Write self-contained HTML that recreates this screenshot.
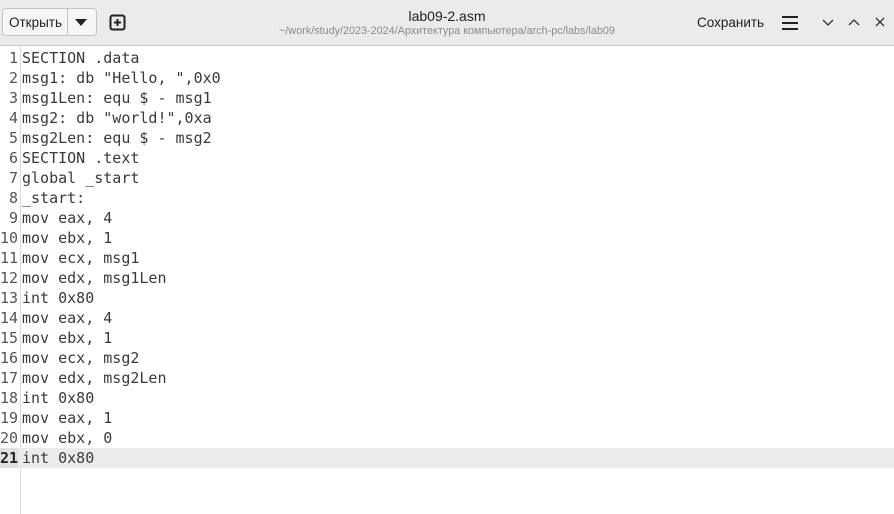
<!DOCTYPE html><html><head><meta charset="utf-8"><style>
body{margin:0;width:894px;height:514px;background:#fff;overflow:hidden;font-family:"Liberation Sans",sans-serif;position:relative}
.hdr{position:absolute;left:0;top:0;width:894px;height:45px;background:#ebebeb;border-bottom:1px solid #c9c9c9}
.btn{position:absolute;top:8px;height:28px;border:1px solid #c4c4c4;background:#f6f6f6;box-sizing:border-box}
.code{position:absolute;top:48px;left:0;width:894px;font-family:"DejaVu Sans Mono",monospace;font-size:15px;color:#3a3a3a}
.ln{height:20px;line-height:20px;white-space:pre;position:relative}
.ln span{display:inline-block;width:18px;text-align:right;color:#555;margin-right:4px}
.cur{background:#ebebeb}
.cur span{color:#222;font-weight:bold;background:#e0e0e0}
.gut{position:absolute;left:20px;top:46px;width:1px;height:468px;background:#dcdcdc}
</style></head><body>
<div class="hdr">
<div class="btn" style="left:2px;width:95px;border-radius:4px"></div>
<div style="position:absolute;left:67px;top:9px;width:1px;height:26px;background:#c4c4c4"></div>
<div style="position:absolute;left:9px;top:15px;font-size:13.5px;color:#222">Открыть</div>
<svg style="position:absolute;left:74px;top:17px" width="14" height="10"><path d="M1 2h12L7 9z" fill="#222"/></svg>
<svg style="position:absolute;left:109px;top:14px" width="18" height="18"><rect x="1.5" y="1.5" width="14" height="14" rx="2" fill="none" stroke="#222" stroke-width="2"/><path d="M8.5 5v7M5 8.5h7" stroke="#222" stroke-width="2"/></svg>
<div style="position:absolute;left:0;width:894px;top:8px;text-align:center;font-size:14px;color:#222">lab09-2.asm</div>
<div style="position:absolute;left:0;width:894px;top:25px;text-align:center;font-size:10.8px;color:#8a8a8a">~/work/study/2023-2024/Архитектура компьютера/arch-pc/labs/lab09</div>
<div style="position:absolute;left:697px;top:15px;font-size:13.5px;color:#222">Сохранить</div>
<svg style="position:absolute;left:781px;top:15px" width="18" height="16"><path d="M1 2h16M1 8h16M1 14h16" stroke="#222" stroke-width="2"/></svg>
<svg style="position:absolute;left:820px;top:16px" width="70" height="14"><path d="M3 4l5 5 5-5" fill="none" stroke="#333" stroke-width="1.3"/><path d="M29 9l5-5 5 5" fill="none" stroke="#333" stroke-width="1.3"/><path d="M56 2l8 8M64 2l-8 8" stroke="#333" stroke-width="1.3"/></svg>
</div>
<div class="gut"></div>
<div class="code">
<div class="ln"><span>1</span>SECTION .data</div>
<div class="ln"><span>2</span>msg1: db "Hello, ",0x0</div>
<div class="ln"><span>3</span>msg1Len: equ $ - msg1</div>
<div class="ln"><span>4</span>msg2: db "world!",0xa</div>
<div class="ln"><span>5</span>msg2Len: equ $ - msg2</div>
<div class="ln"><span>6</span>SECTION .text</div>
<div class="ln"><span>7</span>global _start</div>
<div class="ln"><span>8</span>_start:</div>
<div class="ln"><span>9</span>mov eax, 4</div>
<div class="ln"><span>10</span>mov ebx, 1</div>
<div class="ln"><span>11</span>mov ecx, msg1</div>
<div class="ln"><span>12</span>mov edx, msg1Len</div>
<div class="ln"><span>13</span>int 0x80</div>
<div class="ln"><span>14</span>mov eax, 4</div>
<div class="ln"><span>15</span>mov ebx, 1</div>
<div class="ln"><span>16</span>mov ecx, msg2</div>
<div class="ln"><span>17</span>mov edx, msg2Len</div>
<div class="ln"><span>18</span>int 0x80</div>
<div class="ln"><span>19</span>mov eax, 1</div>
<div class="ln"><span>20</span>mov ebx, 0</div>
<div class="ln cur"><span>21</span>int 0x80</div>
</div>
</body></html>
